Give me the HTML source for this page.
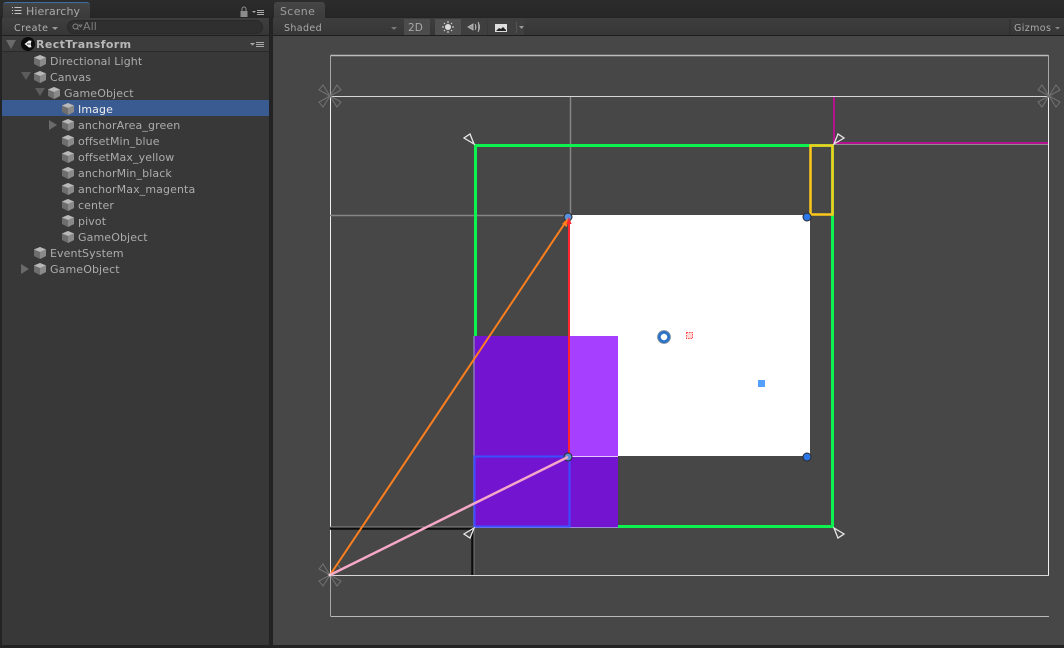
<!DOCTYPE html>
<html><head><meta charset="utf-8"><style>
html,body{margin:0;padding:0;width:1064px;height:648px;overflow:hidden;background:#232323}
body{position:relative;font-family:"DejaVu Sans","Liberation Sans",sans-serif;font-size:11px;color:#b4b4b4}
.a{position:absolute}
.t{position:absolute;white-space:nowrap;line-height:16px;height:16px;font-size:11px;letter-spacing:.01em;color:#acacac}
</style></head><body>
<div class="a" style="left:0;top:0;width:1064px;height:18px;background:linear-gradient(#2c2c2c,#262626)"></div>
<!-- left panel -->
<div class="a" style="left:2px;top:18px;width:267px;height:627px;background:#383838"></div>
<div class="a" style="left:3px;top:2px;width:87px;height:16px;background:linear-gradient(#444,#3a3a3a);border-radius:3px 3px 0 0;border-top:1px solid #3a6ea5;box-sizing:border-box"></div>
<svg class="a" style="left:11px;top:6px" width="12" height="10"><path d="M1 1.500h1M1 4.500h1M1 7.500h1M3.500 1.500h7M3.500 4.500h7M3.500 7.500h7" stroke="#c4c4c4" fill="none"/></svg>
<div class="t" style="left:26px;top:4px;color:#a8a8a8">Hierarchy</div>
<svg class="a" style="left:239px;top:6px" width="30" height="12"><rect x="1.500" y="5" width="7" height="6" fill="#8c8c8c"/><path d="M3 5V3a2 2 0 0 1 4 0v2" stroke="#8c8c8c" fill="none"/><path d="M13 5h4l-2 2z" fill="#aaa"/><path d="M18 4.500h7M18 6.500h7M18 8.500h7" stroke="#aaa"/></svg>
<div class="a" style="left:2px;top:18px;width:267px;height:18px;background:linear-gradient(#3f3f3f,#363636);border-bottom:1px solid #1e1e1e;box-sizing:border-box"></div>
<div class="t" style="left:14px;top:21px;font-size:9.500px;letter-spacing:.05em;color:#b0b0b0">Create</div>
<svg class="a" style="left:52px;top:27px" width="6" height="4"><path d="M0 0h6L3 3z" fill="#999"/></svg>
<div class="a" style="left:67px;top:20px;width:196px;height:14px;border-radius:7px;background:#2f2f2f;border:1px solid #292929;box-sizing:border-box"></div>
<svg class="a" style="left:71px;top:22px" width="12" height="10"><circle cx="4.500" cy="4.500" r="2.500" stroke="#888" fill="none"/><path d="M6 6l2 2M8 3h3l-1.500 2z" stroke="#888" fill="none" stroke-width=".8"/></svg>
<div class="t" style="left:83px;top:19px;color:#7e7e7e">All</div>
<div class="a" style="left:2px;top:36px;width:267px;height:16px;background:#3c3c3c;border-bottom:1px solid #2a2a2a;box-sizing:border-box"></div>
<div class="a" style="left:2px;top:100px;width:267px;height:16px;background:#3a5a92"></div>
<svg class="a" style="left:0;top:36px" width="269" height="240">
<defs><g id="c"><path d="M0 -6L6 -3.500V3L0 6L-6 3V-3.500z" fill="#6e6e6e"/><path d="M-6 -3.500L0 -6L6 -3.500L0 -1z" fill="#b8b8b8"/><path d="M0 -1L6 -3.500V3L0 6z" fill="#8a8a8a"/></g></defs>
<path d="M6 4h10l-5 9z" fill="#6a6a6a"/>
<path d="M21 36h10l-5 8z" fill="#5c5c5c"/><path d="M35 52h10l-5 8z" fill="#5c5c5c"/>
<path d="M49 84l8 5-8 5z" fill="#6a6a6a"/><path d="M21 228l8 5-8 5z" fill="#6a6a6a"/>
<use href="#c" x="40" y="25"/><use href="#c" x="40" y="41"/><use href="#c" x="54" y="57"/><use href="#c" x="68" y="73"/><use href="#c" x="68" y="89"/><use href="#c" x="68" y="105"/><use href="#c" x="68" y="121"/><use href="#c" x="68" y="137"/><use href="#c" x="68" y="153"/><use href="#c" x="68" y="169"/><use href="#c" x="68" y="185"/><use href="#c" x="68" y="201"/><use href="#c" x="40" y="217"/><use href="#c" x="40" y="233"/>
<circle cx="28" cy="8" r="7" fill="#0c0c0c"/><path d="M24 8l5-4 3 .5-1 3.500 1 3.500-3 .5zM27 8h3" fill="#f0f0f0" stroke="#0c0c0c" stroke-width=".8"/>
<path d="M250 7h5l-2.500 2.500z" fill="#aaa"/><path d="M256 6.500h8M256 8.500h8M256 10.500h8" stroke="#aaa"/>
</svg>
<div class="t" style="left:36px;top:37px;font-weight:bold;color:#b8b8b8;letter-spacing:.035em">RectTransform</div>
<div class="t" style="left:50px;top:54px">Directional Light</div>
<div class="t" style="left:50px;top:70px">Canvas</div>
<div class="t" style="left:64px;top:86px">GameObject</div>
<div class="t" style="left:78px;top:102px;color:#ededed">Image</div>
<div class="t" style="left:78px;top:118px">anchorArea_green</div>
<div class="t" style="left:78px;top:134px">offsetMin_blue</div>
<div class="t" style="left:78px;top:150px">offsetMax_yellow</div>
<div class="t" style="left:78px;top:166px">anchorMin_black</div>
<div class="t" style="left:78px;top:182px">anchorMax_magenta</div>
<div class="t" style="left:78px;top:198px">center</div>
<div class="t" style="left:78px;top:214px">pivot</div>
<div class="t" style="left:78px;top:230px">GameObject</div>
<div class="t" style="left:50px;top:246px">EventSystem</div>
<div class="t" style="left:50px;top:262px">GameObject</div>
<!-- scene panel -->
<div class="a" style="left:274px;top:2px;width:51px;height:16px;background:linear-gradient(#464646,#3c3c3c);border-radius:3px 3px 0 0"></div>
<div class="t" style="left:280px;top:4px;color:#9c9c9c;letter-spacing:.03em">Scene</div>
<div class="a" style="left:273px;top:18px;width:791px;height:18px;background:linear-gradient(#3e3e3e,#363636);border-bottom:1px solid #1e1e1e;box-sizing:border-box"></div>
<svg class="a" style="left:273px;top:18px" width="791" height="18">
<path d="M118 9h6l-3 3z" fill="#777"/>
<rect x="131" y="1" width="26" height="16" fill="#4c4c4c"/>
<rect x="162" y="1" width="26" height="16" fill="#505050"/>
<rect x="188" y="1" width="26" height="16" fill="#3f3f3f"/>
<rect x="215" y="1" width="36" height="16" fill="#3f3f3f"/>
<circle cx="175" cy="9" r="3" fill="#ddd"/><path d="M175 3v2M175 13v2M169 9h2M179 9h2M171 5l1 1M178 12l1 1M179 5l-1 1M172 12l-1 1" stroke="#ddd"/>
<path d="M195 9l5-3v6zM202 6q2 3 0 6M205 4q3 5 0 10" stroke="#bbb" fill="#bbb" fill-opacity=".7" stroke-width=".9"/>
<rect x="222" y="6" width="12" height="8" fill="#ddd"/><path d="M223 13l3-3 2 1 2-2 3 3v1h-10z" fill="#222"/>
<path d="M246 8h5l-2.500 3z" fill="#999"/><path d="M243.500 4v11" stroke="#555"/>
<path d="M737 1v16" stroke="#2c2c2c"/>
<path d="M782 9h5l-2.500 2.500z" fill="#888"/>
</svg>
<div class="t" style="left:284px;top:21px;font-size:9.500px;letter-spacing:.04em;color:#aaa">Shaded</div>
<div class="t" style="left:408px;top:20px;color:#a8a8a8;font-size:10.500px">2D</div>
<div class="t" style="left:1014px;top:21px;font-size:9.500px;letter-spacing:.04em;color:#aaa">Gizmos</div>
<div class="a" style="left:273px;top:36px;width:791px;height:609px;background:#474747"></div>
<svg class="a" style="left:0;top:0" width="1064" height="648">
<defs><g id="s" fill="none" stroke="#727272" stroke-width="1"><path d="M0 0L-11 -6L-7 -11zM0 0L11 -6L7 -11zM0 0L-11 6L-7 11zM0 0L11 6L7 11z"/></g></defs>
<!-- outer frame -->
<path d="M330.500 55.500H1048.500" stroke="#bcbcbc" stroke-width="1.500" fill="none"/>
<path d="M330.500 616.500H1049" stroke="#b9b9b9" fill="none"/>
<path d="M330.500 55.500V96.500M1048.500 55V96M330.500 575V616" stroke="#a8a8a8" fill="none"/>
<path d="M330.500 96.500V575.500M1048.500 96.500V575.500" stroke="#f0f0f0" fill="none"/>
<path d="M330 96.500H1049M330 575.500H1049" stroke="#d6d6d6" fill="none"/>
<use href="#s" x="330" y="96"/><use href="#s" x="1049" y="96"/><use href="#s" x="330" y="575"/>
<!-- gray cross -->
<path d="M570.500 97V215M330 215.500H569" stroke="#858585" stroke-width="1.500" fill="none"/>
<!-- magenta -->
<path d="M834 97V144M834 143H1048" stroke="#b4128e" stroke-width="2" fill="none"/>
<path d="M834 144.500H1048" stroke="#8c8c8c"/>
<!-- black -->
<path d="M330 528.500H473" stroke="#0c0c0c" stroke-width="2.500"/><path d="M330 527H473" stroke="#888"/>
<path d="M472.500 528V575" stroke="#0c0c0c" stroke-width="2.500"/><path d="M474 527V575" stroke="#777"/>
<!-- green -->
<rect x="475.500" y="145.500" width="357" height="381" fill="none" stroke="#0cf24e" stroke-width="3"/>
<!-- white image -->
<rect x="569" y="215" width="241" height="241" fill="#fff"/>
<!-- purple -->
<rect x="474" y="336" width="96" height="191" fill="#7214d0"/>
<rect x="570" y="336" width="48" height="120" fill="#a63fff"/>
<rect x="570" y="456" width="48" height="71" fill="#7214d0"/>
<path d="M474 336V527" stroke="#8a78b8" stroke-width="1.500"/>
<path d="M474 527.500H618" stroke="#9a8ad8"/>
<!-- blue -->
<rect x="474.500" y="456.500" width="95" height="70" fill="none" stroke="#3a50ff" stroke-width="2"/>
<path d="M570 456.500H618" stroke="#e6c8ff"/>
<!-- yellow -->
<rect x="810.500" y="145.500" width="22" height="69" fill="none" stroke="#fdc91c" stroke-width="2.500"/>
<!-- red -->
<path d="M569 219V456" stroke="#ff2530" stroke-width="2"/>
<!-- handles -->
<g stroke="#2a2a2a" stroke-width="1"><circle cx="568" cy="217" r="4" fill="#5a8fdc"/><circle cx="807" cy="217" r="4" fill="#2a78e6"/><circle cx="807" cy="457" r="4" fill="#2a78e6"/><circle cx="568" cy="457" r="4" fill="#5d8fd4"/></g>
<!-- arrows -->
<path d="M330 575L565 223" stroke="#ff7f1e" stroke-width="2" fill="none"/>
<path d="M568 218L562 224L567 227z" fill="#ff7f1e"/>
<path d="M569 217l-2.500 7h5z" fill="#ff2530"/>
<path d="M330 575L568 457" stroke="#f6a8c8" stroke-width="2.500" fill="none"/>
<circle cx="330" cy="575" r="1.500" fill="#f6d0e0"/>
<!-- triangles -->
<g fill="none" stroke="#e8e8e8" stroke-width="1.300">
<path d="M474 144L464 138L470 134z"/>
<path d="M834 144L844 138L838 134z"/>
<path d="M834 528L844 534L838 538z"/>
<path d="M474 528L464 534L470 538z"/>
</g>
<!-- center/pivot -->
<circle cx="664" cy="337" r="5" fill="none" stroke="#2d74c8" stroke-width="3.500"/>
<circle cx="664" cy="337" r="6.500" fill="none" stroke="#9a9a9a" stroke-width=".7"/>
<rect x="686.500" y="332.500" width="6" height="6" fill="#ffd8d8" stroke="#ff4a4a" stroke-dasharray="1.500 1"/>
<rect x="758" y="380" width="7" height="7" fill="#54a0ff"/>
</svg>
<div class="a" style="left:273px;top:645px;width:791px;height:3px;background:#232323"></div>
</body></html>
